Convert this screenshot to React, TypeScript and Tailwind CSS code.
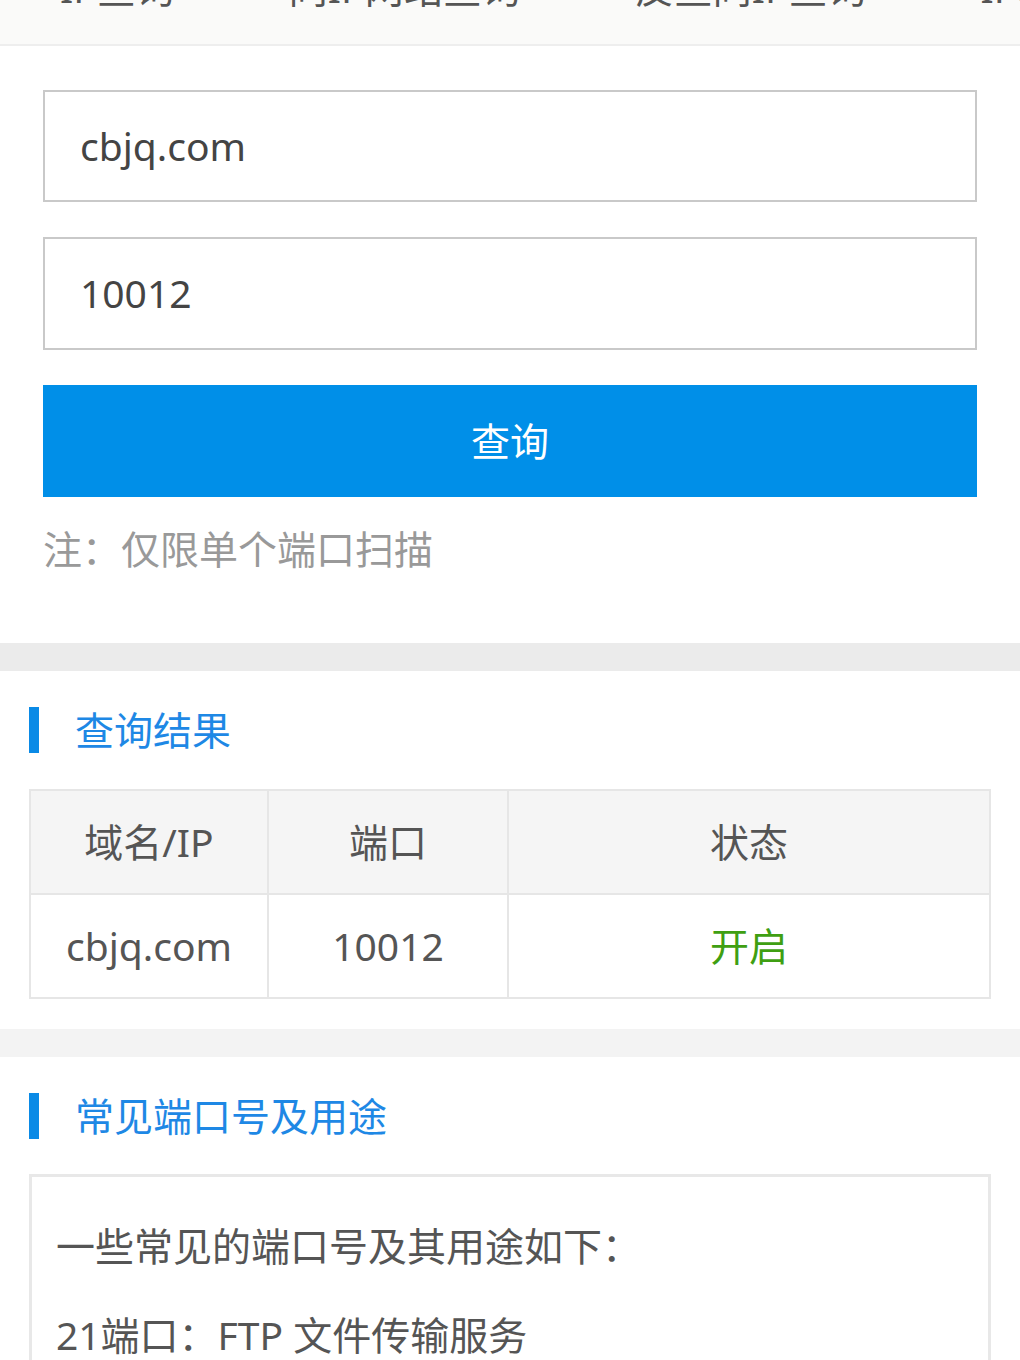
import React from "react";

const FONT = { fontFamily: '"Noto Sans", "Noto Sans CJK SC", sans-serif' };

function SectionTitle({ children }: { children: React.ReactNode }) {
  return (
    <div className="flex items-center h-[46px] pl-[29px]">
      <div className="w-[10px] h-[46px] bg-[#0a8ae6]" />
      <div className="ml-[36px] text-[39px] leading-[46px] text-[#1e88e5]">{children}</div>
    </div>
  );
}

export default function App() {
  const navItems = ["IP查询", "同IP网站查询", "反查同IP查询", "IP地址查询"];
  return (
    <div className="w-[1020px] min-h-[1360px] bg-white overflow-hidden" style={FONT}>
      {/* top nav, scrolled partially out of view */}
      <div className="h-[46px] bg-[#fafaf9] border-b-2 border-[#eeeeee] overflow-hidden">
        <div className="flex gap-[114px] pl-[60px] mt-[-32px] whitespace-nowrap text-[39px] leading-[40px] text-[#555555]">
          {navItems.map((t) => (
            <span key={t}>{t}</span>
          ))}
        </div>
      </div>

      {/* form */}
      <div className="px-[43px] pt-[44px] pb-[69px]">
        <div className="h-[112px] border-2 border-[#c9c9c9] flex items-center pl-[35px] text-[39px] text-[#444444]">
          cbjq.com
        </div>
        <div className="mt-[35px] h-[113px] border-2 border-[#c9c9c9] flex items-center pl-[35px] text-[39px] text-[#444444]">
          10012
        </div>
        <div className="mt-[35px] h-[112px] bg-[#008fe8] flex items-center justify-center text-[39px] text-white">
          查询
        </div>
        <div className="mt-[27px] text-[39px] leading-[50px] text-[#999999]">注：仅限单个端口扫描</div>
      </div>

      <div className="h-[28px] bg-[#ebebeb]" />

      {/* result */}
      <div className="pt-[36px] pb-[30px]">
        <SectionTitle>查询结果</SectionTitle>
        <div className="mx-[29px] mt-[36px] border-2 border-[#e6e6e6] text-[39px]">
          <div className="grid grid-cols-[238px_240px_1fr] h-[104px] bg-[#f5f5f5] text-[#555555] border-b-2 border-[#e6e6e6]">
            <div className="flex items-center justify-center border-r-2 border-[#e6e6e6]">域名/IP</div>
            <div className="flex items-center justify-center border-r-2 border-[#e6e6e6]">端口</div>
            <div className="flex items-center justify-center">状态</div>
          </div>
          <div className="grid grid-cols-[238px_240px_1fr] h-[102px] bg-white text-[#555555]">
            <div className="flex items-center justify-center border-r-2 border-[#e6e6e6]">cbjq.com</div>
            <div className="flex items-center justify-center border-r-2 border-[#e6e6e6]">10012</div>
            <div className="flex items-center justify-center text-[#3f9f12]">开启</div>
          </div>
        </div>
      </div>

      <div className="h-[28px] bg-[#f3f3f3]" />

      {/* common ports */}
      <div className="pt-[36px]">
        <SectionTitle>常见端口号及用途</SectionTitle>
        <div className="mx-[29px] mt-[35px] border-[3px] border-[#e8e8e8] px-[24px] pt-[24px] pb-[24px] text-[39px] leading-[89px] text-[#555555]">
          <p>一些常见的端口号及其用途如下：</p>
          <p>21端口：FTP 文件传输服务</p>
          <p>22端口：SSH 远程登录服务</p>
          <p>23端口：TELNET 终端仿真服务</p>
        </div>
      </div>
    </div>
  );
}
